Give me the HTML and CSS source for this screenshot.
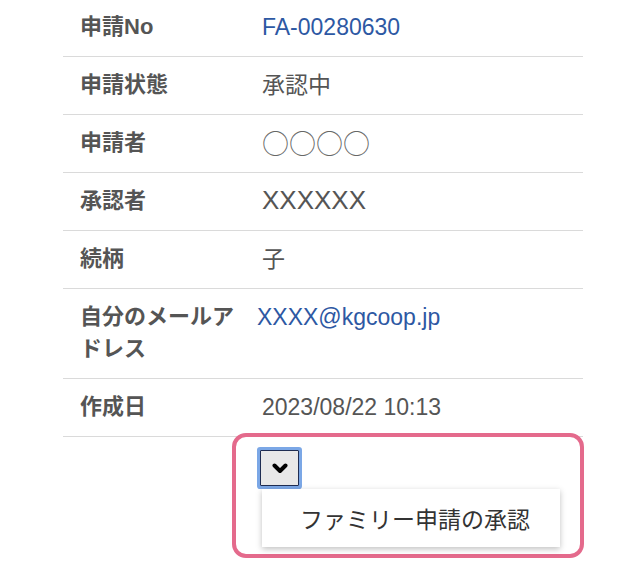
FILE: index.html
```html
<!DOCTYPE html>
<html lang="ja">
<head>
    <meta charset="UTF-8">
    <meta name="viewport" content="width=device-width, initial-scale=1.0">
    <title>ファミリー申請詳細</title>
    <link rel="stylesheet" href="styles.css">
</head>
<body>
    <div class="detail-list">
        <div class="detail-row">
            <div class="detail-label">申請No</div>
            <div class="detail-value"><a class="link" href="#">FA-00280630</a></div>
        </div>
        <div class="detail-row">
            <div class="detail-label">申請状態</div>
            <div class="detail-value">承認中</div>
        </div>
        <div class="detail-row">
            <div class="detail-label">申請者</div>
            <div class="detail-value"><span class="masked-circle">○○○○</span></div>
        </div>
        <div class="detail-row">
            <div class="detail-label">承認者</div>
            <div class="detail-value"><span class="masked-x">XXXXXX</span></div>
        </div>
        <div class="detail-row">
            <div class="detail-label">続柄</div>
            <div class="detail-value">子</div>
        </div>
        <div class="detail-row">
            <div class="detail-label">自分のメールアドレス</div>
            <div class="detail-value"><a class="link mail" href="#">XXXX@kgcoop.jp</a></div>
        </div>
        <div class="detail-row">
            <div class="detail-label">作成日</div>
            <div class="detail-value">2023/08/22 10:13</div>
        </div>
    </div>

    <div class="action-box">
        <button type="button" class="select-btn" aria-label="メニュー">
            <svg width="16" height="11" viewBox="0 0 16 11">
                <polyline points="2.5,2.5 8,8 13.5,2.5" fill="none" stroke="#000" stroke-width="4" stroke-linecap="round" stroke-linejoin="round"/>
            </svg>
        </button>
        <div class="action-menu">
            <div class="action-item">ファミリー申請の承認</div>
        </div>
    </div>
</body>
</html>
```

FILE: styles.css
```css
/* page base */
body, html {
    margin: 0;
    padding: 0;
    background: #fff;
    font-family: 'Liberation Sans', 'Noto Sans CJK JP', sans-serif;
    color: #555;
}

.detail-list {
    width: 520px;
    margin: -1px 0 0 63px;
}

.detail-row {
    display: flex;
    padding: 12px 0 13px;
    line-height: 32px;
    border-bottom: 1px solid #dadada;
}

.detail-label {
    width: 162px;
    padding-left: 17px;
    flex-shrink: 0;
    font-size: 22px;
    font-weight: bold;
    color: #555;
}

.detail-value {
    height: 100%;
    padding-left: 20px;
    font-size: 23px;
    color: #555;
}

.link {
    color: #2d58a3;
    text-decoration: none;
}

.link.mail {
    margin-left: -5px;
}

.masked-circle {
    display: inline-block;
    height: 32px;
    line-height: 32px;
    vertical-align: top;
    font-family: 'Noto Sans CJK JP', sans-serif;
    font-size: 27px;
    font-weight: 300;
    color: #666;
}

.masked-x {
    display: inline-block;
    height: 32px;
    line-height: 30px;
    vertical-align: top;
    font-size: 26px;
}

/* highlighted action area */
.action-box {
    width: 352px;
    box-sizing: border-box;
    margin: -4px 0 0 232px;
    padding: 10px 20px 7px 21px;
    border: 4px solid #e46a8c;
    border-radius: 14px;
    background: #fff;
    position: relative;
}

.select-btn {
    display: flex;
    align-items: center;
    justify-content: center;
    width: 39px;
    height: 36px;
    margin: 3px;
    padding: 0;
    box-sizing: border-box;
    background: #e8e8e8;
    border: 1px solid #1f2d52;
    border-radius: 1px;
    box-shadow: 0 0 0 3px #7ba7e6;
}

.action-menu {
    width: 298px;
    margin-left: 5px;
    background: #fff;
    box-shadow: 0 2px 6px rgba(0, 0, 0, 0.25);
}

.action-item {
    height: 58px;
    line-height: 58px;
    padding-left: 38px;
    font-size: 23px;
    color: #333;
    font-family: 'Noto Sans CJK JP', sans-serif;
}
```
